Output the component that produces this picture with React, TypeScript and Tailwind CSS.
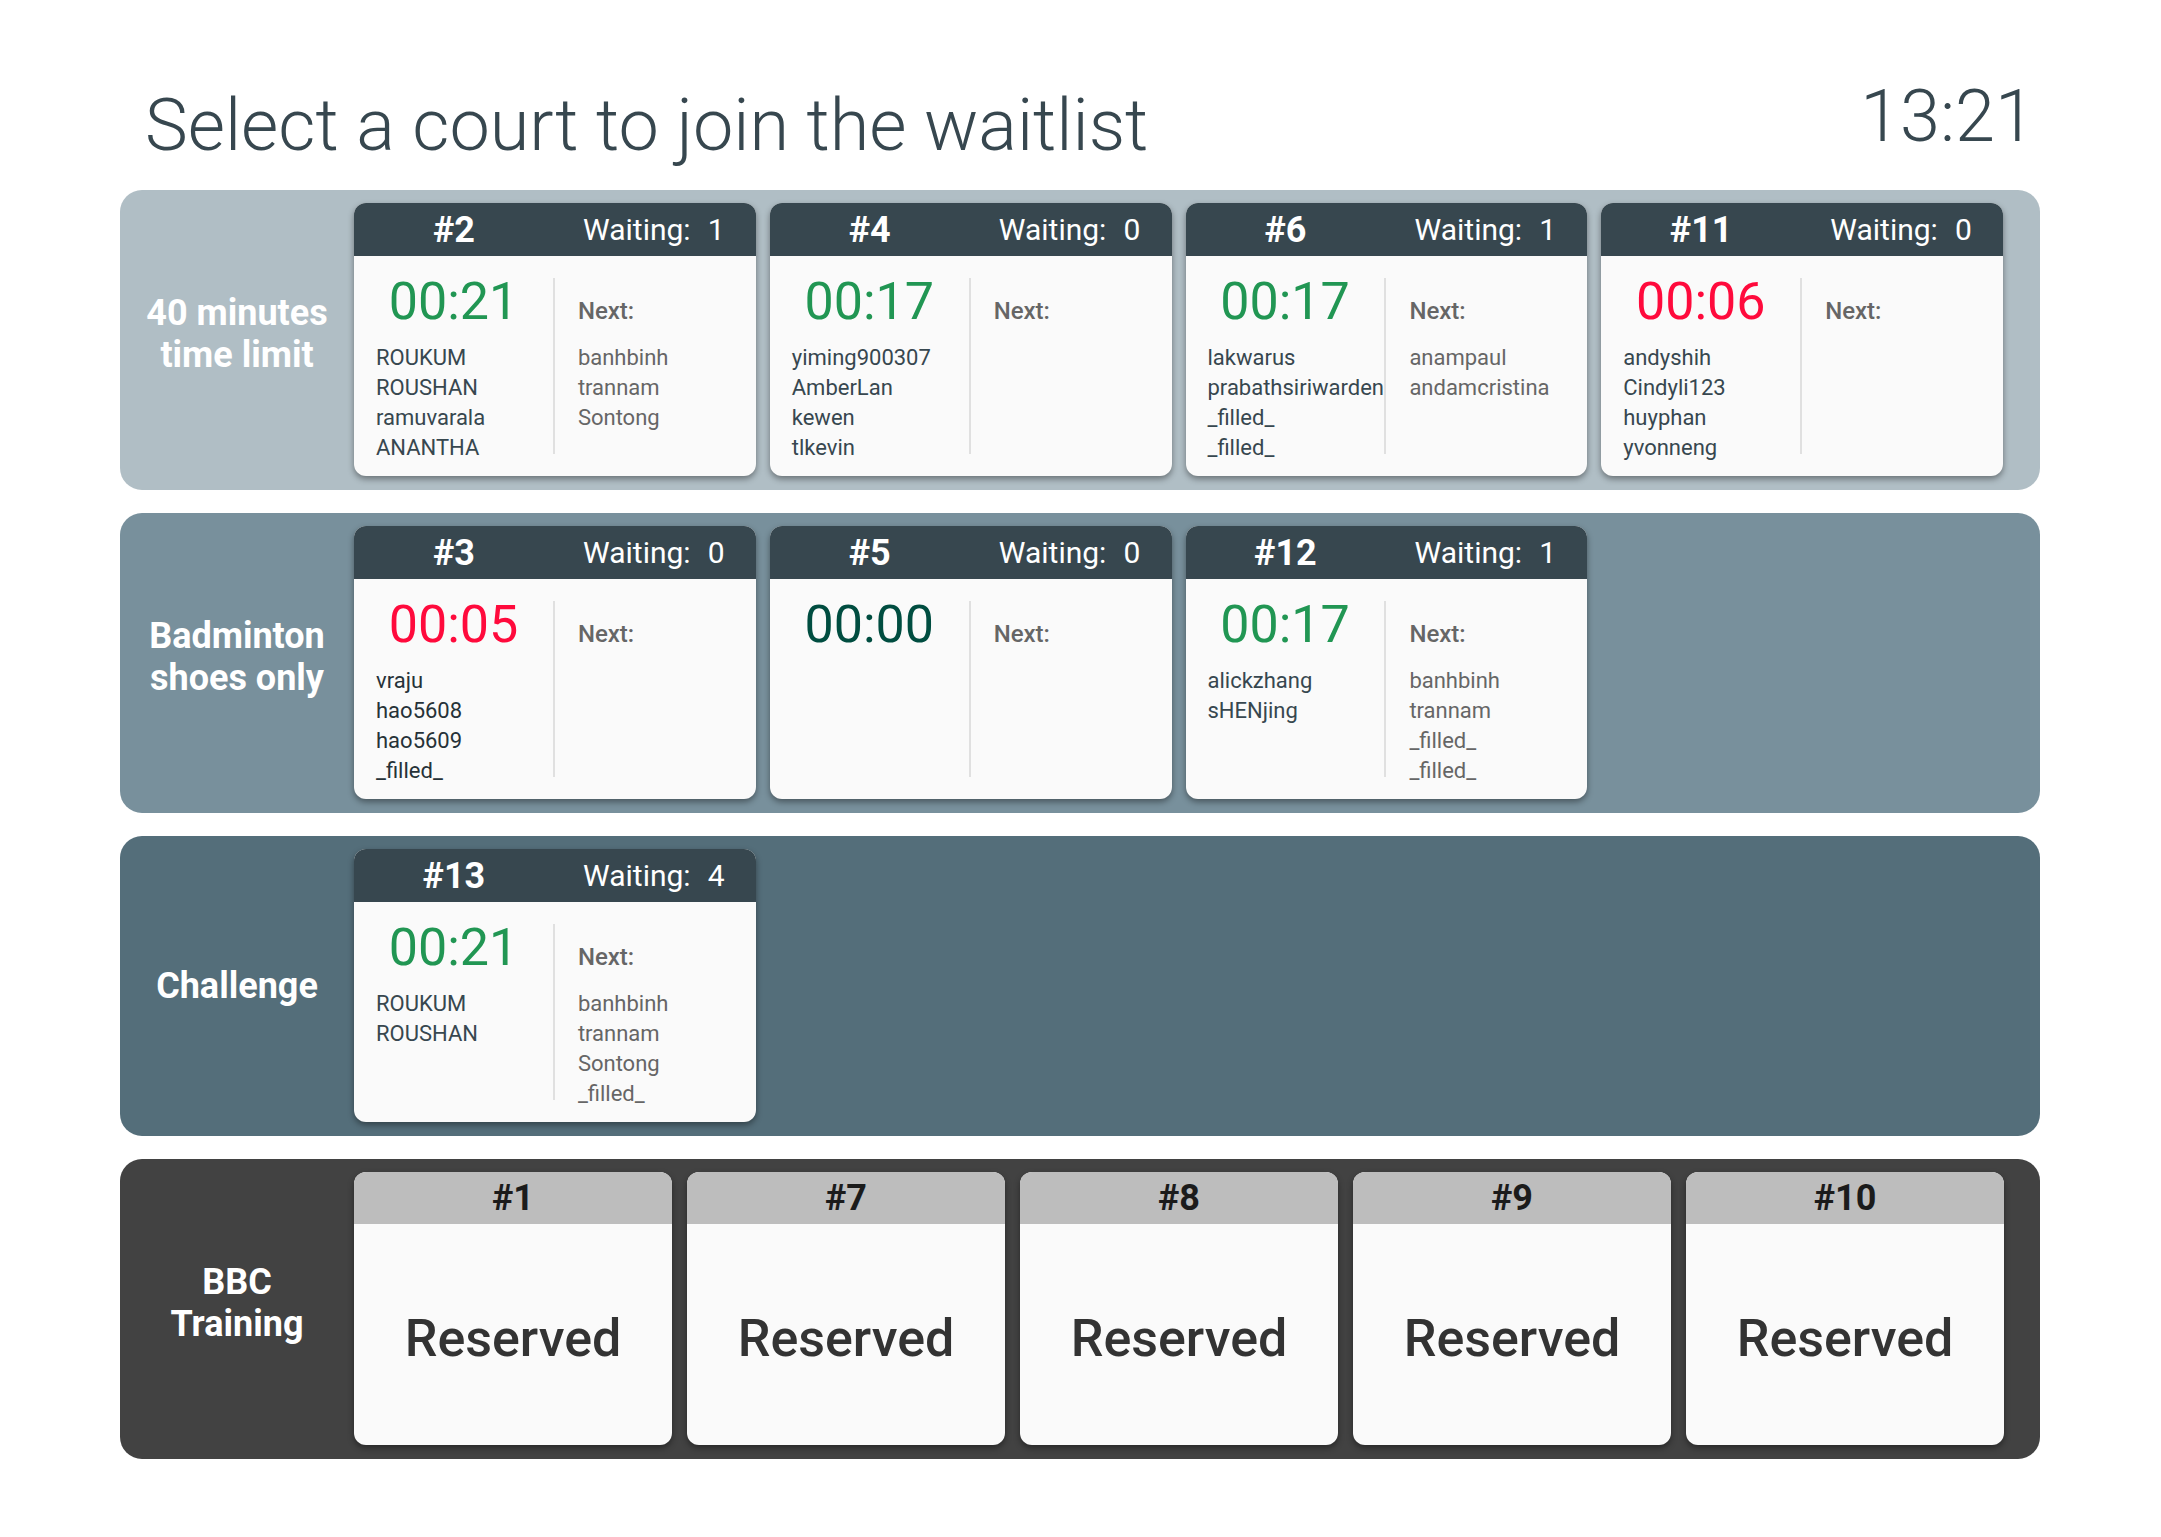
type Court = {
  id: string;
  waiting: number;
  time: string;
  timeColor: string;
  players: string[];
  playerColor?: string;
  next: string[];
};

type Group = {
  label: string[];
  color: string;
  courts: Court[];
};

const GREEN = 'text-[#219653]';
const RED = 'text-[#ff0a3c]';
const TEAL = 'text-[#004d40]';

const groups: Group[] = [
  {
    label: ['40 minutes', 'time limit'],
    color: 'bg-[#b0bec5]',
    courts: [
      { id: '#2', waiting: 1, time: '00:21', timeColor: GREEN, players: ['ROUKUM', 'ROUSHAN', 'ramuvarala', 'ANANTHA'], next: ['banhbinh', 'trannam', 'Sontong'] },
      { id: '#4', waiting: 0, time: '00:17', timeColor: GREEN, players: ['yiming900307', 'AmberLan', 'kewen', 'tlkevin'], next: [] },
      { id: '#6', waiting: 1, time: '00:17', timeColor: GREEN, players: ['lakwarus', 'prabathsiriwarden', '_filled_', '_filled_'], next: ['anampaul', 'andamcristina'] },
      { id: '#11', waiting: 0, time: '00:06', timeColor: RED, players: ['andyshih', 'Cindyli123', 'huyphan', 'yvonneng'], next: [] },
    ],
  },
  {
    label: ['Badminton', 'shoes only'],
    color: 'bg-[#78909c]',
    courts: [
      { id: '#3', waiting: 0, time: '00:05', timeColor: RED, players: ['vraju', 'hao5608', 'hao5609', '_filled_'], playerColor: 'text-[#263238]', next: [] },
      { id: '#5', waiting: 0, time: '00:00', timeColor: TEAL, players: [], next: [] },
      { id: '#12', waiting: 1, time: '00:17', timeColor: GREEN, players: ['alickzhang', 'sHENjing'], next: ['banhbinh', 'trannam', '_filled_', '_filled_'] },
    ],
  },
  {
    label: ['Challenge'],
    color: 'bg-[#546e7a]',
    courts: [
      { id: '#13', waiting: 4, time: '00:21', timeColor: GREEN, players: ['ROUKUM', 'ROUSHAN'], next: ['banhbinh', 'trannam', 'Sontong', '_filled_'] },
    ],
  },
];

const reserved = ['#1', '#7', '#8', '#9', '#10'];

const cardClass =
  'flex h-[273px] min-w-0 flex-col overflow-hidden rounded-xl bg-[#fafafa] text-left shadow-[0_3px_6px_rgba(0,0,0,0.4)]';

function GroupLabel({ lines }: { lines: string[] }) {
  return (
    <h2
      className={`flex w-[234px] shrink-0 flex-col items-center justify-center text-4xl leading-[42px] font-bold text-white ${lines.length > 1 ? 'pb-3' : ''}`}
    >
      {lines.map((line) => (
        <span key={line}>{line}</span>
      ))}
    </h2>
  );
}

function Names({ names, color }: { names: string[]; color: string }) {
  return (
    <span className={`flex shrink-0 flex-col text-[22px] leading-[30px] ${color}`}>
      {names.map((name, i) => (
        <span key={i}>{name}</span>
      ))}
    </span>
  );
}

function CourtCard({ court }: { court: Court }) {
  return (
    <button type="button" className={cardClass}>
      <span className="grid h-[53px] w-full shrink-0 grid-cols-2 items-center bg-[#37474f] pr-0.5 text-center text-white">
        <span className="text-4xl font-bold">{court.id}</span>
        <span className="flex justify-center gap-[17px] text-3xl">
          <span>Waiting:</span>
          <span>{court.waiting}</span>
        </span>
      </span>
      <span className="grid h-[220px] w-full grid-cols-2 py-[22px]">
        <span className="flex h-[176px] flex-col border-r-2 border-[#e0e0e0] pl-[22px]">
          <span className={`h-[65px] shrink-0 pr-[22px] text-center text-[52px] leading-[48px] ${court.timeColor}`}>
            {court.time}
          </span>
          <Names names={court.players} color={court.playerColor ?? 'text-[#37474f]'} />
        </span>
        <span className="flex h-[176px] flex-col pl-[23px]">
          <span className="h-[65px] shrink-0 pt-[18px] text-[24px] leading-[30px] font-medium text-[#666666]">Next:</span>
          <Names names={court.next} color="text-[#666666]" />
        </span>
      </span>
    </button>
  );
}

export default function App() {
  return (
    <main className="min-h-screen bg-white pt-[75px] pr-[121px] pb-[78px] pl-[120px] font-[Roboto,sans-serif]">
      <header className="flex h-[115px] items-start justify-between pr-[5px] pl-[25px] text-7xl font-light text-[#37474f]">
        <h1 className="pt-[9px] leading-[84px]">Select a court to join the waitlist</h1>
        <time className="leading-[84px]">13:21</time>
      </header>
      <div className="flex flex-col gap-[23px]">
        {groups.map((group) => (
          <section key={group.label[0]} className={`flex h-[300px] rounded-[22px] ${group.color}`}>
            <GroupLabel lines={group.label} />
            <div className="grid grow grid-cols-4 gap-[14px] pt-[13px] pr-[37px]">
              {group.courts.map((court) => (
                <CourtCard key={court.id} court={court} />
              ))}
            </div>
          </section>
        ))}
        <section className="flex h-[300px] rounded-[22px] bg-[#424242]">
          <GroupLabel lines={['BBC', 'Training']} />
          <div className="grid grow grid-cols-5 gap-[15px] pt-[13px] pr-[36px]">
            {reserved.map((id) => (
              <div key={id} className={cardClass}>
                <h3 className="flex h-[52px] shrink-0 items-center justify-center bg-[#bdbdbd] text-4xl font-bold text-[#1b1b1b]">
                  {id}
                </h3>
                <p className="flex grow items-center justify-center pt-2 text-[52px] font-medium text-[#333333]">Reserved</p>
              </div>
            ))}
          </div>
        </section>
      </div>
    </main>
  );
}
